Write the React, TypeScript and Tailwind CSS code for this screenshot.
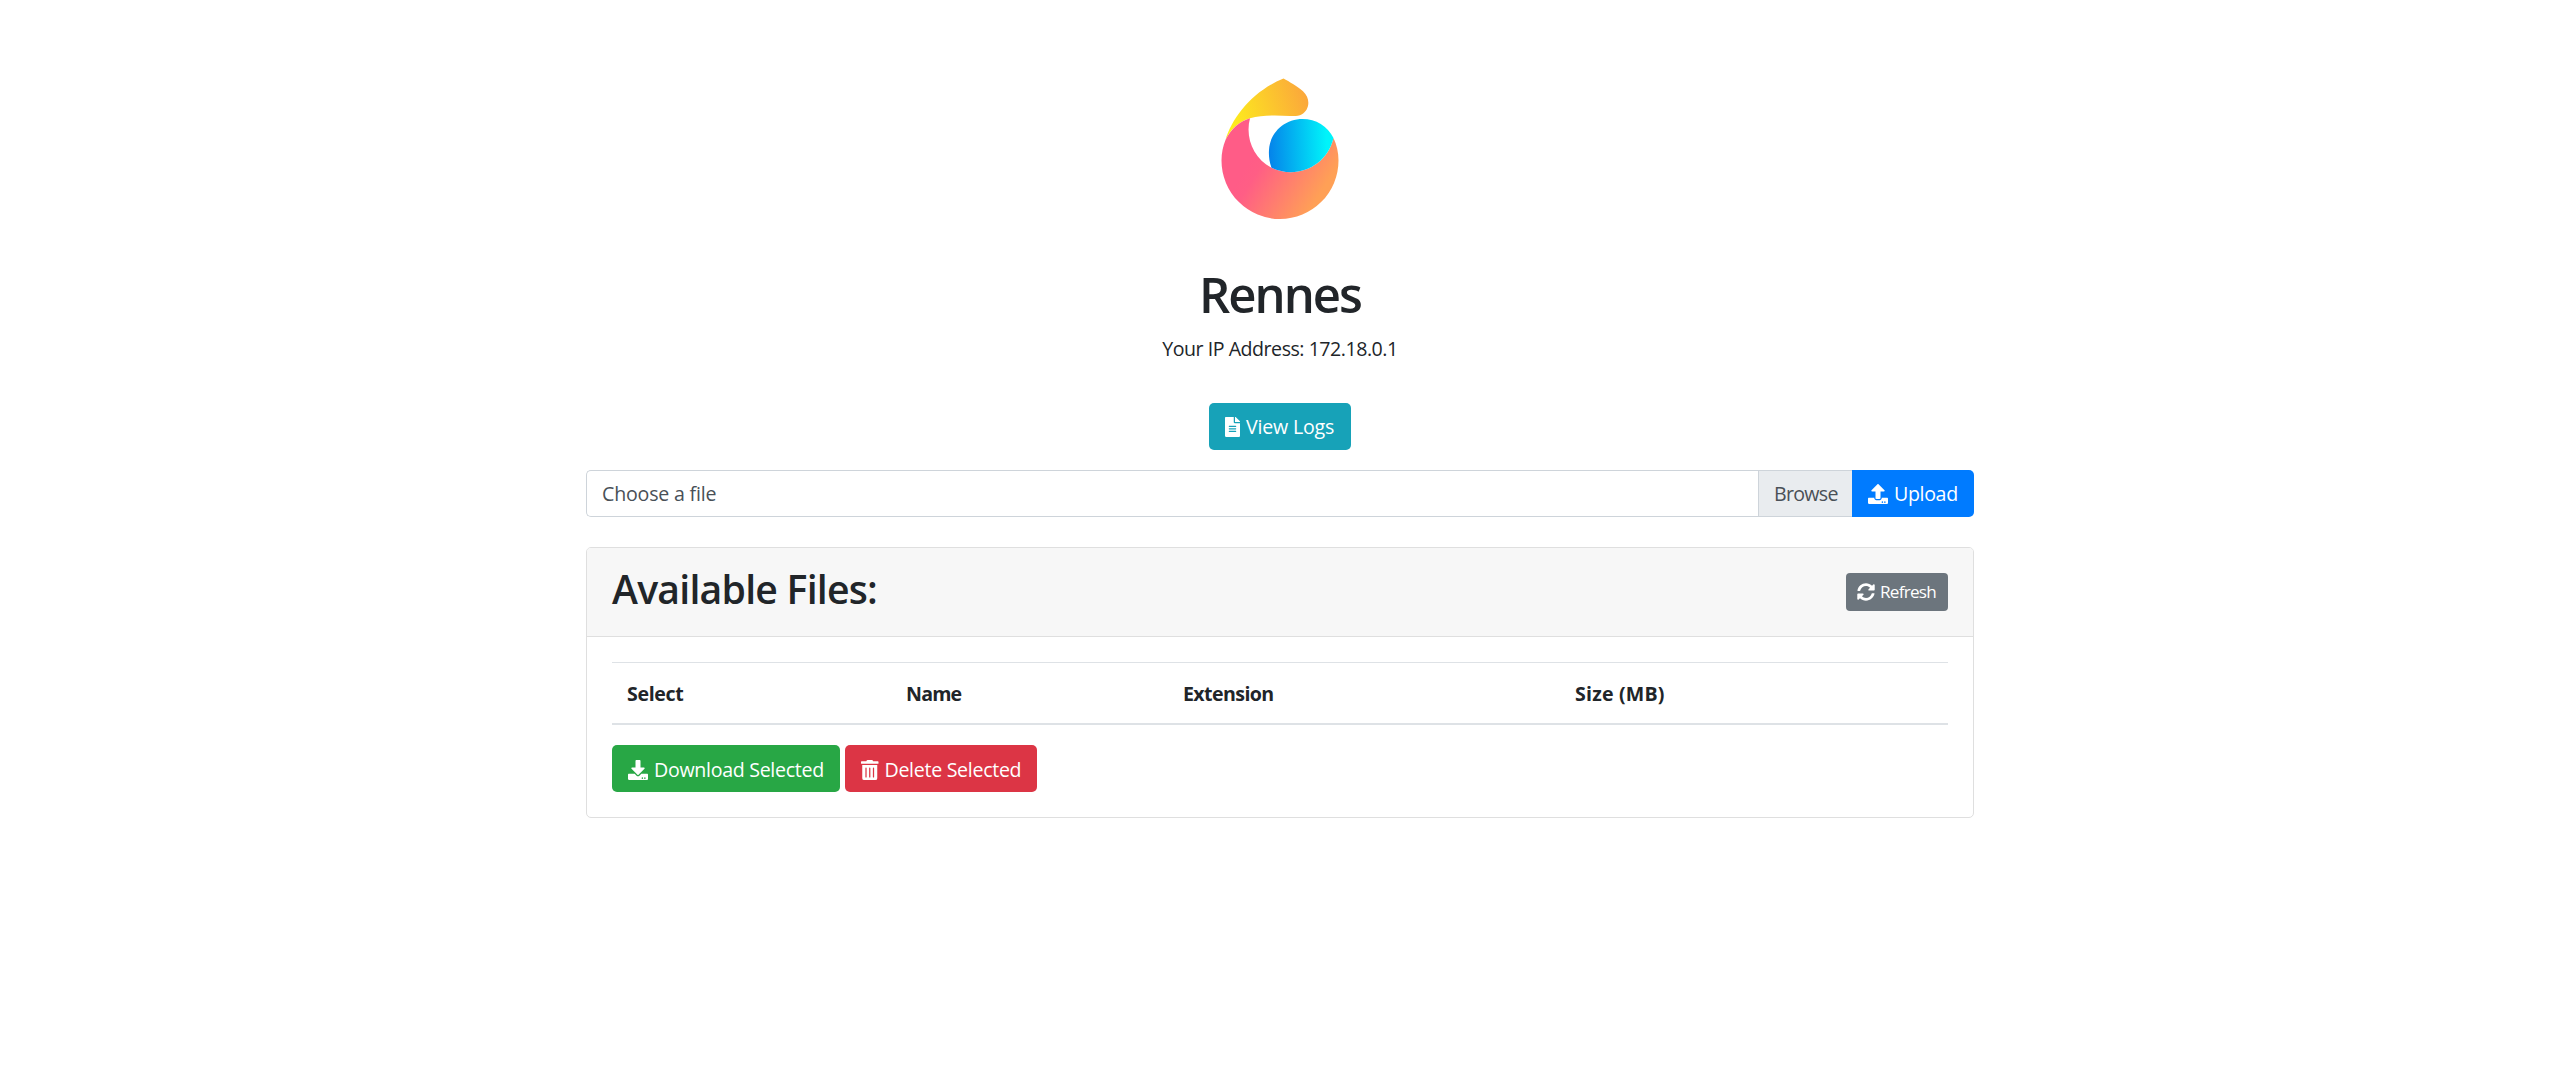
import React from "react";
import { FaFileAlt, FaUpload, FaDownload, FaTrashAlt, FaSyncAlt } from "react-icons/fa";

function Logo() {
  return (
    <svg className="mx-auto block h-[180px] w-[160px]" viewBox="0 0 160 180" aria-label="Rennes logo">
      <defs>
        <linearGradient id="leaf" gradientUnits="userSpaceOnUse" x1="30" y1="62" x2="108" y2="36">
          <stop offset="0" stopColor="#fdee1c" />
          <stop offset="1" stopColor="#fba63c" />
        </linearGradient>
        <linearGradient id="body" gradientUnits="userSpaceOnUse" x1="52" y1="98" x2="118" y2="138">
          <stop offset="0" stopColor="#ff5c87" />
          <stop offset="0.15" stopColor="#ff5e85" />
          <stop offset="1" stopColor="#ffa056" />
        </linearGradient>
        <linearGradient id="core" gradientUnits="userSpaceOnUse" x1="69" y1="92" x2="127" y2="90">
          <stop offset="0" stopColor="#0583ea" />
          <stop offset="1" stopColor="#00f4fa" />
        </linearGradient>
      </defs>
      <path
        d="M25.5 80C32 57 54 30 83.500 18.600C89 21.500 98 27 103 31.200C111 38.500 109.500 50 102 54.300C98 56.500 94 56 90 56C76 55.300 62 55 50 58.200C38 62 30 70 25.500 80Z"
        fill="url(#leaf)"
      />
      <path
        d="M50 58.200C45 77 53 98 71.500 107.800C97 120 127 106 133.500 78C136.700 84.500 138.500 92.500 138.500 100.500A58.500 58.500 0 0 1 21.500 100.500C21.500 93 23 86 25.500 80C31 69 39 61.500 50 58.200Z"
        fill="url(#body)"
      />
      <path
        d="M71.500 107.800C69 101 68.700 95 69 90C70 72 85 59 102.500 59C116 59 127.500 66 133.500 78C127 106 97 120 71.500 107.800Z"
        fill="url(#core)"
      />
    </svg>
  );
}

export default function App() {
  return (
    <div className="min-h-[1072px] bg-white font-['Open_Sans','Noto_Sans',sans-serif] text-[19.6px] leading-[30px] text-[#212529]">
      <main className="mx-auto w-[1389px] pt-[60px] pl-px">
        <Logo />
        <h1 className="mt-6 text-center text-[49px] leading-[60px] font-semibold tracking-[-2px]">Rennes</h1>
        <p className="mt-2.5 text-center tracking-[-0.48px] word-spacing-[1px]">Your IP Address: 172.18.0.1</p>

        <button className="mx-auto mt-[39px] flex h-[47px] w-[142px] items-center rounded-[5px] bg-[#17a2b8] pl-4 whitespace-nowrap text-white">
          <FaFileAlt className="h-5 w-[15px] shrink-0" />
          <span className="ml-1.5 tracking-[-0.2px]">View Logs</span>
        </button>

        <form className="mt-5 flex h-[47px]">
          <label className="flex flex-1 items-center rounded-l-[5px] border border-r-0 border-[#ced4da] pl-[15px] tracking-[-0.2px] text-[#495057]">
            Choose a file
          </label>
          <span className="flex w-[94px] items-center border border-r-0 border-[#ced4da] bg-[#e9ecef] pl-[15px] tracking-[-0.7px] text-[#495057]">
            Browse
          </span>
          <button type="button" className="flex w-[122px] items-center rounded-r-[5px] bg-[#007bff] pl-4 text-white">
            <FaUpload className="size-5 shrink-0" />
            <span className="ml-1.5 tracking-[-0.35px]">Upload</span>
          </button>
        </form>

        <section className="mt-[30px] h-[271px] rounded-[5px] border border-[#dfdfdf]">
          <header className="flex h-[89px] items-center justify-between rounded-t-[4px] border-b border-[#dfdfdf] bg-[#f7f7f7] px-[25px]">
            <h2 className="mb-1.5 text-[39.2px] leading-[48px] font-semibold tracking-[-0.77px]">Available Files:</h2>
            <button className="flex h-[38px] w-[102px] items-center rounded-[4px] bg-[#6c757d] pl-[11px] text-[17.15px] text-white">
              <FaSyncAlt className="size-[18px] shrink-0" />
              <span className="ml-[5px] tracking-[-0.75px]">Refresh</span>
            </button>
          </header>
          <div className="px-[25px] pt-[25px]">
            <table className="w-full table-fixed text-left">
              <thead>
                <tr className="border-t border-b-2 border-[#dee2e6] [&>th]:px-[15px] [&>th]:pt-4 [&>th]:pb-3.5 [&>th]:font-bold">
                  <th className="w-[279px] tracking-[-0.35px]">Select</th>
                  <th className="w-[277px] tracking-[-0.8px]">Name</th>
                  <th className="w-[392px] tracking-[-0.6px]">Extension</th>
                  <th className="tracking-[0.2px]">Size (MB)</th>
                </tr>
              </thead>
            </table>
            <div className="mt-5 flex gap-[5px] whitespace-nowrap text-white">
              <button className="flex h-[47px] w-[228px] items-center rounded-[5px] bg-[#28a745] pt-0.5 pl-4">
                <FaDownload className="size-5 shrink-0" />
                <span className="ml-1.5 tracking-[-0.3px]">Download Selected</span>
              </button>
              <button className="flex h-[47px] w-[192px] items-center rounded-[5px] bg-[#dc3545] pt-0.5 pl-4">
                <FaTrashAlt className="h-5 w-[17.5px] shrink-0" />
                <span className="ml-1.5 tracking-[-0.3px]">Delete Selected</span>
              </button>
            </div>
          </div>
        </section>
      </main>
    </div>
  );
}
